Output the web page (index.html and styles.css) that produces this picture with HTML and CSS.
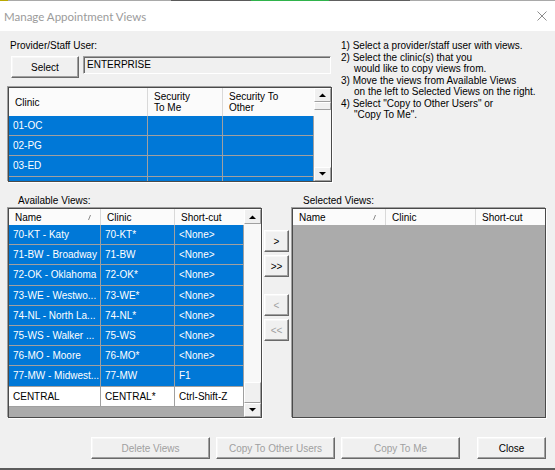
FILE: index.html
```html
<!DOCTYPE html>
<html lang="en">
<head>
  <meta charset="UTF-8">
  <meta name="viewport" content="width=device-width, initial-scale=1.0">
  <link rel="stylesheet" href="styles.css">
  <title>Manage Appointment Views</title>
</head>
<body>

<div class="screen-edge"></div>

<div class="titlebar">
  <span class="title">Manage Appointment Views</span>
  <svg class="close-x" width="10" height="10" viewBox="0 0 10 10"><path d="M0.5 0.5L9.5 9.5M9.5 0.5L0.5 9.5"/></svg>
</div>

<div class="dialog">

  <div class="top-section">
    <div class="provider">
      <div class="label">Provider/Staff User:</div>
      <div class="user-row">
        <button class="btn select-btn">Select</button>
        <div class="textbox">ENTERPRISE</div>
      </div>

      <div class="grid clinic-grid">
        <div class="grid-cols">
          <div class="row head">
            <div class="cell">Clinic</div>
            <div class="cell">Security<br>To Me</div>
            <div class="cell">Security To<br>Other</div>
          </div>
          <div class="row data sel"><div class="cell">01-OC</div><div class="cell"></div><div class="cell"></div></div>
          <div class="row data sel"><div class="cell">02-PG</div><div class="cell"></div><div class="cell"></div></div>
          <div class="row data sel"><div class="cell">03-ED</div><div class="cell"></div><div class="cell"></div></div>
          <!-- next row is only a sliver, its text is scrolled out of view -->
          <div class="row data sel"><div class="cell"></div><div class="cell"></div><div class="cell"></div></div>
        </div>
        <div class="vscroll">
          <div class="sb-btn"><svg width="7" height="4" viewBox="0 0 7 4"><path d="M0 4H7L3.5 0.5Z"/></svg></div>
          <div class="sb-thumb"></div>
          <div class="sb-track"></div>
          <div class="sb-btn"><svg width="7" height="4" viewBox="0 0 7 4"><path d="M0 0H7L3.5 3.5Z"/></svg></div>
        </div>
      </div>
    </div>

    <div class="steps">
      <div>1) Select a provider/staff user with views.</div>
      <div>2) Select the clinic(s) that you</div>
      <div class="indent">would like to copy views from.</div>
      <div>3) Move the views from Available Views</div>
      <div class="indent">on the left to Selected Views on the right.</div>
      <div>4) Select "Copy to Other Users" or</div>
      <div class="indent">"Copy To Me".</div>
    </div>
  </div>

  <div class="views">
    <div class="view-panel">
      <div class="label panel-label">Available Views:</div>
      <div class="grid views-grid">
        <div class="grid-cols">
          <div class="row head">
            <div class="cell sortable">Name<svg class="sort-mark" width="3" height="5" viewBox="0 0 3 5"><path d="M0.5 5L2.5 0"/></svg></div>
            <div class="cell">Clinic</div>
            <div class="cell">Short-cut</div>
          </div>
          <div class="row data sel"><div class="cell">70-KT - Katy</div><div class="cell">70-KT*</div><div class="cell">&lt;None&gt;</div></div>
          <div class="row data sel"><div class="cell">71-BW - Broadway</div><div class="cell">71-BW</div><div class="cell">&lt;None&gt;</div></div>
          <div class="row data sel"><div class="cell">72-OK - Oklahoma</div><div class="cell">72-OK*</div><div class="cell">&lt;None&gt;</div></div>
          <div class="row data sel"><div class="cell">73-WE - Westwo...</div><div class="cell">73-WE*</div><div class="cell">&lt;None&gt;</div></div>
          <div class="row data sel"><div class="cell">74-NL - North La...</div><div class="cell">74-NL*</div><div class="cell">&lt;None&gt;</div></div>
          <div class="row data sel"><div class="cell">75-WS - Walker ...</div><div class="cell">75-WS</div><div class="cell">&lt;None&gt;</div></div>
          <div class="row data sel"><div class="cell">76-MO - Moore</div><div class="cell">76-MO*</div><div class="cell">&lt;None&gt;</div></div>
          <div class="row data sel"><div class="cell">77-MW - Midwest...</div><div class="cell">77-MW</div><div class="cell">F1</div></div>
          <div class="row data"><div class="cell">CENTRAL</div><div class="cell">CENTRAL*</div><div class="cell">Ctrl-Shift-Z</div></div>
        </div>
        <div class="vscroll">
          <div class="sb-btn sb-up"><svg width="7" height="4" viewBox="0 0 7 4"><path d="M0 4H7L3.5 0.5Z"/></svg></div>
          <div class="sb-track"></div>
          <div class="sb-thumb views-thumb"></div>
          <div class="sb-btn"><svg width="7" height="4" viewBox="0 0 7 4"><path d="M0 0H7L3.5 3.5Z"/></svg></div>
        </div>
      </div>
    </div>

    <div class="move-buttons">
      <button class="btn move-btn">&gt;</button>
      <button class="btn move-btn">&gt;&gt;</button>
      <button class="btn move-btn disabled back">&lt;</button>
      <button class="btn move-btn disabled">&lt;&lt;</button>
    </div>

    <div class="view-panel">
      <div class="label panel-label selected-label">Selected Views:</div>
      <div class="grid views-grid selected-grid">
        <div class="grid-cols">
          <div class="row head">
            <div class="cell sortable">Name<svg class="sort-mark" width="3" height="5" viewBox="0 0 3 5"><path d="M0.5 5L2.5 0"/></svg></div>
            <div class="cell">Clinic</div>
            <div class="cell">Short-cut</div>
          </div>
        </div>
      </div>
    </div>
  </div>

  <div class="actions">
    <button class="btn action-btn disabled">Delete Views</button>
    <button class="btn action-btn disabled">Copy To Other Users</button>
    <button class="btn action-btn disabled">Copy To Me</button>
    <button class="btn close-btn">Close</button>
  </div>

</div>

<div class="screen-bottom"></div>

</body>
</html>
```

FILE: styles.css
```css
body {
  margin: 0;
  width: 555px;
  height: 470px;
  overflow: hidden;
  font-family: "Liberation Sans", Arial, sans-serif;
  font-size: 10px;
  color: #000;
  background-color: #f0f0f0;
}

/* 1px strip of the desktop showing above the window */
.screen-edge {
  height: 1px;
  background: linear-gradient(to right, #b9a800 0 8px, #a9a9a9 8px 171px, #5a5a5a 171px 251px,
    #2fb34b 251px 329px, #606060 329px 410px, #a9a9a9 410px);
}

.screen-bottom {
  height: 2px;
  background-color: #5c5c5c;
}

.titlebar {
  height: 30px;
  background-color: #fff;
  display: flex;
  align-items: center;
  justify-content: space-between;
  padding: 0 8px 0 4px;
}

.title {
  font-family: Lato, "Noto Sans", sans-serif;
  font-size: 11.5px;
  color: #9b9b9b;
}

.close-x path {
  stroke: #8c8c8c;
  stroke-width: 1;
  fill: none;
}

.dialog {
  height: 437px;
  box-sizing: border-box;
  padding: 9px 9px 0 8px;
}

.label {
  line-height: 12px;
  height: 12px;
  padding-left: 2px;
}

/* buttons, classic 3D look */
.btn {
  font-family: inherit;
  font-size: 10px;
  color: #000;
  background-color: #f0f0f0;
  border: 1px solid;
  border-color: #fff #696969 #696969 #fff;
  box-shadow: inset -1px -1px 0 #a0a0a0, inset 1px 1px 0 #f7f7f7;
  height: 22px;
  box-sizing: border-box;
  padding: 0;
}

.btn.disabled {
  color: #a0a0a0;
}

.top-section {
  display: flex;
  gap: 9px;
}

.provider {
  width: 324px;
  flex: none;
}

.user-row {
  display: flex;
  align-items: flex-start;
  gap: 4px;
  margin-top: 4px;
  padding-left: 3px;
}

.select-btn {
  width: 68px;
}

.textbox {
  width: 248px;
  height: 18px;
  box-sizing: border-box;
  border: 1px solid;
  border-color: #a0a0a0 #fff #fff #a0a0a0;
  box-shadow: inset 1px 1px 0 #696969;
  padding: 1px 2px 0 3px;
  line-height: 14px;
}

.steps {
  line-height: 11.5px;
  white-space: nowrap;
}

.steps .indent {
  padding-left: 13px;
}

/* data grids */
.grid {
  display: flex;
  box-sizing: border-box;
  border: 1px solid #4a4a4a;
  box-shadow: -1px -1px 0 #a0a0a0, 1px 1px 0 #fff;
  background-color: #ababab;
  overflow: hidden;
}

.grid-cols {
  flex: 1;
  min-width: 0;
  display: flex;
  flex-direction: column;
  overflow: hidden;
}

.row {
  display: grid;
  flex: none;
}

.cell {
  white-space: nowrap;
  overflow: hidden;
}

.head {
  background-color: #fbfbfb;
}

.head .cell {
  display: flex;
  align-items: center;
  padding-left: 5px;
  border-right: 1px solid #d9d9d9;
  line-height: 11px;
}

.head .cell:last-child {
  border-right: none;
}

.data {
  height: 20.2px;
  box-sizing: border-box;
  background-color: #fff;
  border-bottom: 1px solid #a0a0a0;
  line-height: 19px;
}

.data .cell {
  padding-left: 4px;
  border-right: 1px solid #a0a0a0;
}

.data.sel {
  background-color: #0078d7;
  color: #fff;
}

.clinic-grid {
  margin-top: 9px;
  height: 95px;
}

.clinic-grid .row {
  grid-template-columns: 139px 75px 1fr;
}

.clinic-grid .head {
  height: 28px;
}

.clinic-grid .head .cell {
  padding-left: 6px;
}

/* vertical scroll bar */
.vscroll {
  width: 17px;
  flex: none;
  display: flex;
  flex-direction: column;
  background-color: #f8f8f8;
}

.sb-btn {
  height: 14px;
  flex: none;
  box-sizing: border-box;
  display: flex;
  align-items: center;
  justify-content: center;
  background-color: #f0f0f0;
  border: 1px solid;
  border-color: #fff #a0a0a0 #a0a0a0 #fff;
}

.sb-btn path {
  fill: #000;
}

.sb-thumb {
  height: 8px;
  flex: none;
  box-sizing: border-box;
  background-color: #f0f0f0;
  border: 1px solid;
  border-color: #fff #a0a0a0 #a0a0a0 #fff;
}

.sb-track {
  flex: 1;
}

.views {
  display: flex;
  margin-top: 13px;
}

.view-panel {
  width: 254px;
  flex: none;
}

.panel-label {
  padding-left: 10px;
  padding-bottom: 1px;
}

.selected-label {
  padding-left: 11px;
}

.views-grid {
  height: 210px;
}

.views-grid .row {
  grid-template-columns: 92px 74px 1fr;
}

.views-grid .head {
  height: 16px;
}

.views-grid .head .cell {
  padding-left: 6px;
}

.sortable {
  justify-content: space-between;
  padding-right: 9px;
}

.sort-mark path {
  stroke: #8a8a8a;
  stroke-width: 1;
}

.sb-up {
  height: 15px;
}

.views-thumb {
  height: 21px;
}

.selected-grid .row {
  grid-template-columns: 93px 90px 1fr;
}

.selected-grid .head .cell {
  padding-left: 6px;
}

.move-buttons {
  width: 25px;
  flex: none;
  margin: 0 3px 0 2px;
  padding-top: 35px;
  display: flex;
  flex-direction: column;
  gap: 3px;
}

.move-btn {
  width: 25px;
}

.move-btn.back {
  margin-top: 14px;
}

.actions {
  display: flex;
  justify-content: flex-end;
  gap: 6px;
  margin-top: 19px;
}

.action-btn {
  width: 119px;
}

.close-btn {
  width: 69px;
  margin-left: 11px;
}
```
